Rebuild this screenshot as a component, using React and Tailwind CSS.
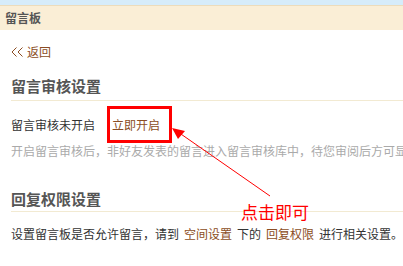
const App = () => {
  return (
    <div className="w-[403px] h-[266px] overflow-hidden bg-white relative" style={{ fontFamily: '"Noto Sans CJK SC", sans-serif' }}>
      <div className="h-[5px] bg-[#d6ecfa]" />
      <div className="h-[25px] bg-[#faeed6] border-t border-[#ecdcbc] flex items-center pl-[5px]">
        <span className="text-[12px] font-bold text-[#555]">留言板</span>
      </div>

      <div className="pl-[11px]">
        <div className="mt-[15px] h-[14px] flex items-center text-[12px] text-[#8b4d23] leading-none">
          <svg width="13" height="10" viewBox="0 0 13 10" className="mr-[3px]">
            <polyline points="5.5,0.5 1,5 5.5,9.5" fill="none" stroke="#8b4d23" strokeWidth="1" />
            <polyline points="11.5,0.5 7,5 11.5,9.5" fill="none" stroke="#8b4d23" strokeWidth="1" />
          </svg>
          返回
        </div>

        <div className="mt-[16px] h-[20px] flex items-center text-[15px] font-bold text-[#555] leading-none">留言审核设置</div>
        <div className="mt-[5px] border-t border-[#f2ead2]" />

        <div className="mt-[5px] flex items-center text-[12px] text-[#333] leading-none">
          <span>留言审核未开启</span>
          <span className="ml-[12px] w-[65px] h-[37px] border-[3px] border-[#ff0000] flex items-center pl-[2px] text-[#8b4d23]">立即开启</span>
        </div>
        <div className="mt-[2px] text-[12px] text-[#aaa] whitespace-nowrap leading-none">开启留言审核后，非好友发表的留言进入留言审核库中，待您审阅后方可显示</div>

        <div className="mt-[33px] h-[16px] flex items-center text-[15px] font-bold text-[#555] leading-none">回复权限设置</div>
        <div className="mt-[5px] border-t border-[#f2ead2]" />

        <div className="mt-[16px] flex text-[12px] text-[#333] whitespace-nowrap leading-none">
          <span>设置留言板是否允许留言，请到</span>
          <span className="mx-[5px] text-[#8b4d23]">空间设置</span>
          <span>下的</span>
          <span className="mx-[5px] text-[#8b4d23]">回复权限</span>
          <span>进行相关设置。</span>
        </div>
      </div>

      <svg className="absolute left-0 top-0 pointer-events-none" width="403" height="266">
        <line x1="178" y1="132" x2="270" y2="196" stroke="#ff0000" strokeWidth="1" />
        <polygon points="172,128 185,131 178,139" fill="#ff0000" />
      </svg>
      <div className="absolute left-[241px] top-[203px] text-[17px] text-[#ff0000] leading-none">点击即可</div>
    </div>
  );
};

export default App;
